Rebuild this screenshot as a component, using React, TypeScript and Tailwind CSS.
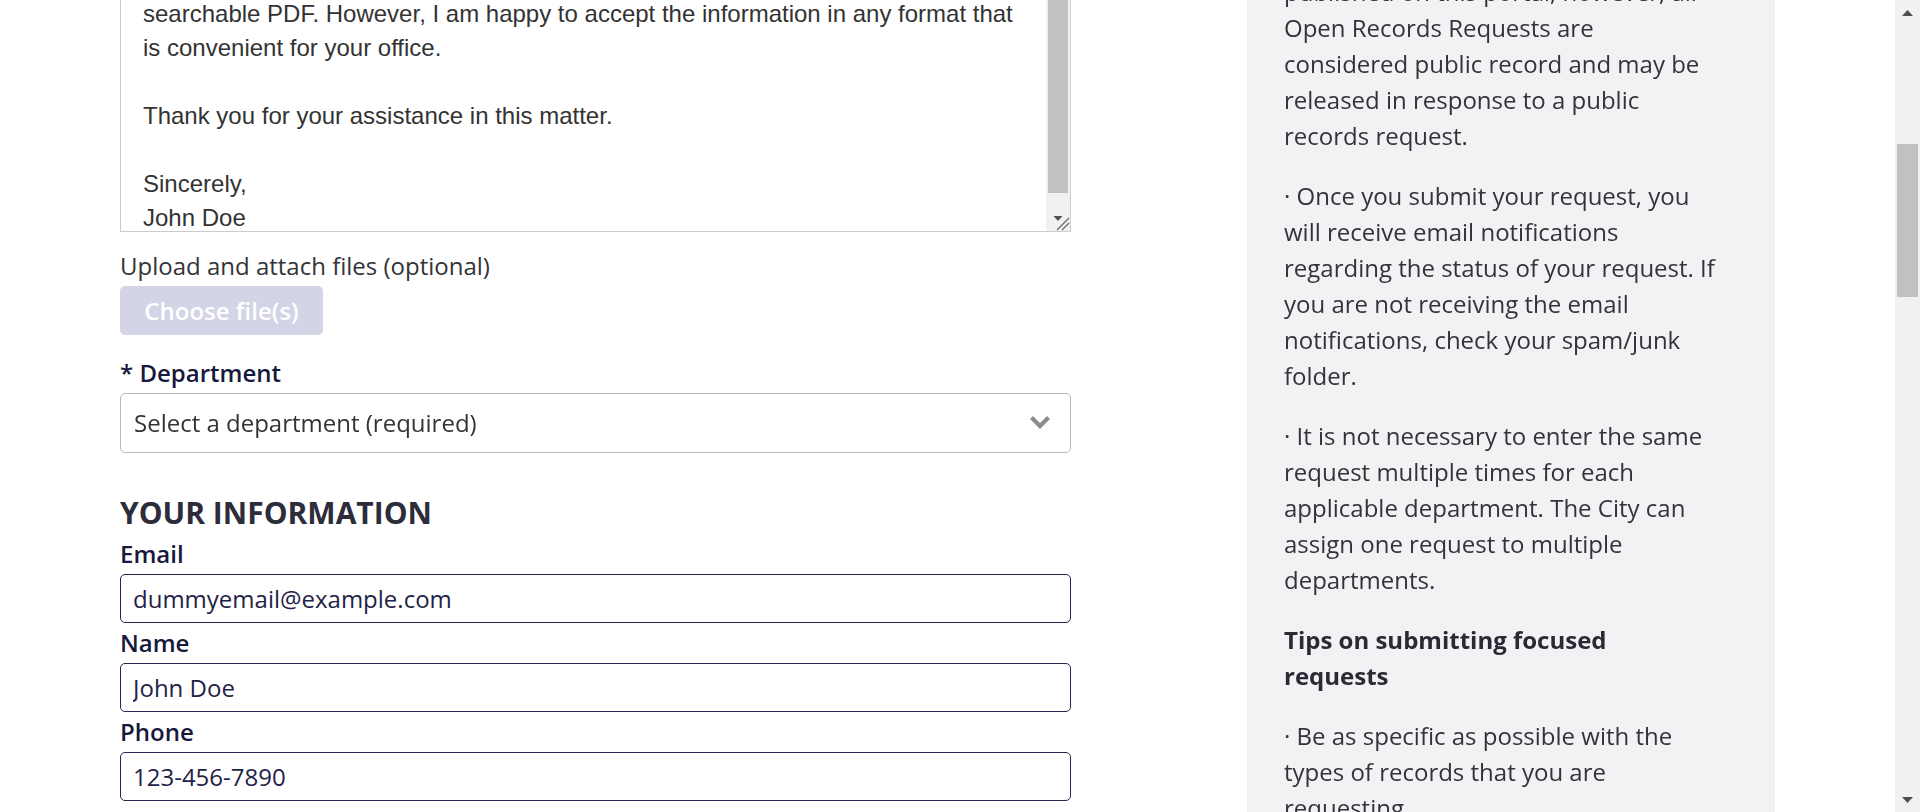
import { useLayoutEffect, useRef } from "react";

const letter = `Dear Records Custodian,

Under the Open Records Act, I am requesting copies of all building permits, inspection reports and related correspondence for the property at 123 Main Street, issued between January 1, 2020 and December 31, 2023.

I would prefer to receive the records in electronic format, preferably as a
searchable PDF. However, I am happy to accept the information in any format that is convenient for your office.

Thank you for your assistance in this matter.

Sincerely,
John Doe`;

function FieldLabel({ children }: { children: React.ReactNode }) {
  return <label className="block text-[24px] leading-[40px] font-semibold text-[#16193b]">{children}</label>;
}

function TextInput({ value }: { value: string }) {
  return (
    <input
      type="text"
      defaultValue={value}
      className="block w-full h-[49px] px-[12px] rounded-[5px] border border-[#232851] bg-white text-[24px] text-[#1f2347] outline-none"
    />
  );
}

function Arrow({ down }: { down?: boolean }) {
  return (
    <svg width="11" height="6" viewBox="0 0 11 6">
      <path d={down ? "M0 0 H11 L5.5 6 Z" : "M0 6 H11 L5.5 0 Z"} fill="#505050" />
    </svg>
  );
}

export default function App() {
  const pageRef = useRef<HTMLDivElement>(null);
  const letterRef = useRef<HTMLTextAreaElement>(null);

  // the screenshot is taken part way down the page, with the letter scrolled near its end
  useLayoutEffect(() => {
    if (pageRef.current) pageRef.current.scrollTop = 684;
    const ta = letterRef.current;
    if (ta) ta.scrollTop = ta.scrollHeight - ta.clientHeight - 26;
  }, []);

  return (
    <div className="h-[812px] flex bg-white font-['Open_Sans',sans-serif]">
      <div ref={pageRef} className="flex-1 overflow-y-scroll">
        <div className="min-h-[4150px] flex flex-col">
          {/* Header */}
          <header className="h-[88px] shrink-0 bg-[#1b2150] flex items-center px-[120px]">
            <span className="text-white text-[24px] font-bold">City Open Records Center</span>
          </header>

          {/* Title block */}
          <section className="h-[314px] shrink-0 px-[120px] pt-[72px]">
            <p className="text-[18px] text-[#555]">Home / Requests / New</p>
            <h1 className="mt-[16px] text-[40px] leading-[52px] font-bold text-[#16193b]">Make an Open Records Request</h1>
            <p className="mt-[16px] text-[24px] leading-[36px] text-[#333]">Fill out the form below to submit your request.</p>
          </section>

          <div className="flex flex-1 items-stretch">
            {/* Form column */}
            <main className="w-[951px] ml-[120px] shrink-0 pt-[53px]">
              <FieldLabel>* Describe the record(s) requested</FieldLabel>
              <div className="flex h-[421px] border border-[#cccccc] bg-white">
                <textarea
                  ref={letterRef}
                  defaultValue={letter}
                  className="flex-1 min-w-0 h-full py-[22px] pl-[22px] pr-[22px] resize-none border-0 bg-white text-[24px] leading-[34px] text-[#333333] font-['Liberation_Sans',Arial,sans-serif] outline-none overflow-y-scroll"
                />
                {/* scrollbar + resize grip */}
                <div className="w-[24px] shrink-0 flex flex-col bg-[#f1f1f1]">
                  <div className="h-[18px] flex items-center justify-center">
                    <Arrow />
                  </div>
                  <div className="flex-1 flex flex-col pb-[20px]">
                    <div className="flex-1 mx-[2px] bg-[#c1c1c1]" />
                  </div>
                  <div className="h-[18px] flex items-start justify-center pt-[3px]">
                    <svg width="24" height="15" viewBox="0 0 24 15">
                      <path d="M7.5 0 H16.5 L12 5 Z" fill="#505050" />
                      <path d="M11 14 L23 2 M16 14 L23 7" stroke="#6a6a6a" strokeWidth="1.3" />
                    </svg>
                  </div>
                </div>
              </div>

              <div className="mt-[14px] text-[24px] leading-[40px] text-[#333338]">Upload and attach files (optional)</div>
              <button className="w-[203px] h-[49px] rounded-[5px] bg-[#d3d5e6] text-white text-[24px] font-semibold">Choose file(s)</button>

              <div className="mt-[18px]">
                <FieldLabel>* Department</FieldLabel>
                <div className="relative">
                  <select className="block w-full h-[60px] pl-[13px] pr-[50px] appearance-none rounded-[5px] border border-[#b7b5c5] bg-white text-[24px] text-[#333338] outline-none">
                    <option>Select a department (required)</option>
                  </select>
                  <svg className="absolute right-[20px] top-[22px] pointer-events-none" width="22" height="15" viewBox="0 0 22 15">
                    <path d="M2.5 2.5 L11 11 L19.5 2.5" fill="none" stroke="#8c8c8c" strokeWidth="4.2" />
                  </svg>
                </div>
              </div>

              <h2 className="mt-[39px] text-[30px] leading-[42px] font-bold text-[#2c2c3a]">YOUR INFORMATION</h2>
              <FieldLabel>Email</FieldLabel>
              <TextInput value="dummyemail@example.com" />
              <FieldLabel>Name</FieldLabel>
              <TextInput value="John Doe" />
              <FieldLabel>Phone</FieldLabel>
              <TextInput value="123-456-7890" />
              <FieldLabel>Mailing address</FieldLabel>
              <TextInput value="" />
            </main>

            {/* Guidance sidebar */}
            <aside className="w-[528px] ml-[176px] shrink-0 bg-[#f2f2f4] pt-[40px] pl-[37px]">
              <div className="w-[437px] text-[24px] leading-[36px] text-[#333338] space-y-[24px]">
                <p className="font-bold text-[#2a2a35]">Before you submit</p>
                <p>· Please read these notes first.</p>
                <p>· Fields marked * are required.</p>
                <p>
                  · Your request will not be
                  <br />
                  published on this portal, however, all Open Records Requests are considered public record and may be
                  released in response to a public records request.
                </p>
                <p>
                  · Once you submit your request, you will receive email notifications regarding the status of your
                  request. If you are not receiving the email notifications, check your spam/junk folder.
                </p>
                <p>
                  · It is not necessary to enter the same request multiple times for each applicable department. The
                  City can assign one request to multiple departments.
                </p>
                <p className="font-bold text-[#2a2a35]">
                  Tips on submitting focused
                  <br />
                  requests
                </p>
                <p>· Be as specific as possible with the types of records that you are requesting.</p>
                <p>· Narrow the date range of your request where you can.</p>
              </div>
            </aside>
          </div>
        </div>
      </div>

      {/* page scrollbar */}
      <div className="w-[25px] shrink-0 flex flex-col bg-[#f1f1f1]">
        <div className="h-[25px] flex items-center justify-center">
          <Arrow />
        </div>
        <div className="flex-1">
          <div className="mt-[119px] h-[153px] mx-[2px] bg-[#c1c1c1]" />
        </div>
        <div className="h-[25px] flex items-center justify-center">
          <Arrow down />
        </div>
      </div>
    </div>
  );
}
